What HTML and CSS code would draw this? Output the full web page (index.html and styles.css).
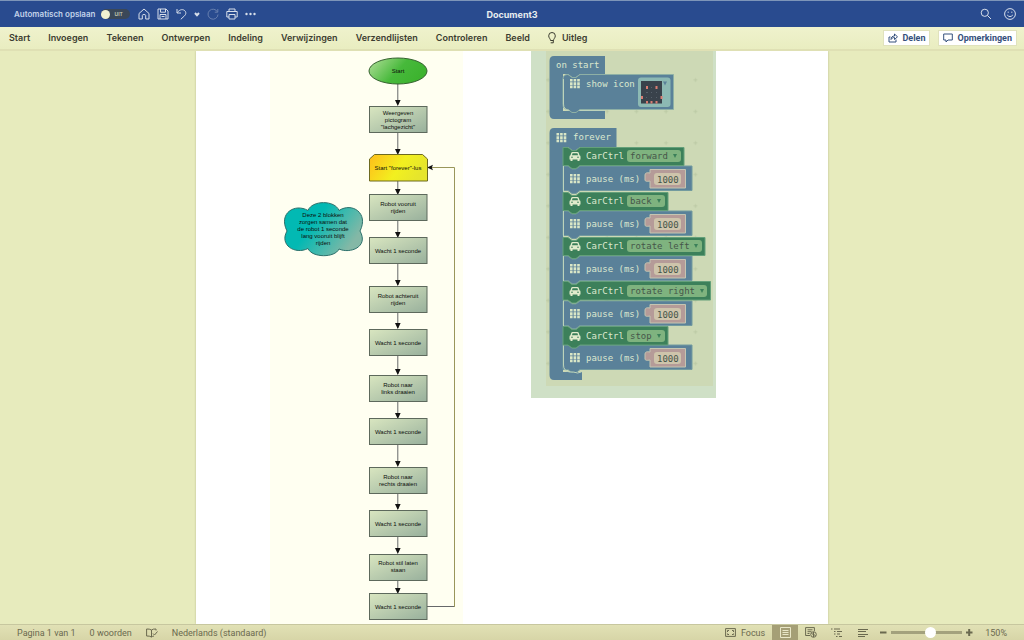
FILE: index.html
```html
<!DOCTYPE html>
<html lang="nl">
<head>
<meta charset="utf-8">
<title>Document3</title>
<link rel="stylesheet" href="styles.css">
</head>
<body>
<header class="titlebar">
  <div class="quick">
    <label class="autosave"><span>Automatisch opslaan</span>
      <span class="switch"><input type="checkbox" class="knob"><span>UIT</span></span>
    </label>
    <div class="tools">
      <button class="tool" aria-label="Start"><svg width="12" height="12" viewBox="0 0 12 12"><path d="M1 5.500 6 1l5 4.500V11H7.700V7.500Q7.700 6.500 6 6.500T4.300 7.500V11H1z"/></svg></button>
      <button class="tool" aria-label="Opslaan"><svg width="12" height="12" viewBox="0 0 12 12"><path d="M1 1h8l2 2v8H1zM3.500 1v3.200h5V1M3 11V6.500h6V11M4.500 8.500h3"/></svg></button>
      <button class="tool" aria-label="Ongedaan maken"><svg width="11" height="12" viewBox="0 0 11 12"><path d="M1 1v4h4M1.200 4.800C3 2 6 .8 8.300 2.300c2.200 1.700 1.800 4 .2 5.500L4.800 11.300"/></svg></button>
      <button class="tool chevron" aria-label="Meer ongedaan maken"><svg width="6" height="12" viewBox="0 0 6 12"><path d="M1 5l2 2.200L5 5"/></svg></button>
      <button class="tool faded" aria-label="Opnieuw"><svg width="12" height="12" viewBox="0 0 12 12"><path d="M10.500 4A5 5 0 1 0 11 6.500M10.800 1v3.200H7.800"/></svg></button>
      <button class="tool" aria-label="Afdrukken"><svg width="12" height="12" viewBox="0 0 12 12"><path d="M3 3.500V1h6v2.500M3 9H.8V3.500h10.400V9H9M3 6.500h6V11H3z"/></svg></button>
      <button class="tool" aria-label="Meer"><svg width="11" height="12" viewBox="0 0 11 12"><g class="dots"><circle cx="1.500" cy="6" r="1.200"/><circle cx="5.500" cy="6" r="1.200"/><circle cx="9.500" cy="6" r="1.200"/></g></svg></button>
    </div>
  </div>
  <h1 class="title">Document3</h1>
  <div class="account">
    <button class="tool" aria-label="Zoeken"><svg width="12" height="12" viewBox="0 0 12 12"><circle cx="4.800" cy="4.800" r="3.600"/><path d="M7.500 7.500 11 11"/></svg></button>
    <button class="tool" aria-label="Feedback"><svg width="12" height="12" viewBox="0 0 12 12"><circle cx="6" cy="6" r="5.400"/><path d="M3.200 7q2.800 3.200 5.600 0M4.200 3.600v1.200M7.800 3.600v1.200"/></svg></button>
  </div>
</header>
<nav class="ribbon">
  <div class="tabs">
    <button class="tab">Start</button>
    <button class="tab">Invoegen</button>
    <button class="tab">Tekenen</button>
    <button class="tab">Ontwerpen</button>
    <button class="tab">Indeling</button>
    <button class="tab">Verwijzingen</button>
    <button class="tab">Verzendlijsten</button>
    <button class="tab">Controleren</button>
    <button class="tab">Beeld</button>
    <button class="tab tell"><svg width="8" height="12" viewBox="0 0 8 12"><path d="M2.500 8.500C2.500 6.800.7 6 .7 3.800a3.300 3.300 0 0 1 6.600 0C7.300 6 5.500 6.800 5.500 8.500zM2.700 10.800h2.600V8.500"/></svg>Uitleg</button>
  </div>
  <div class="share">
    <button class="action"><svg width="10" height="10" viewBox="0 0 10 10"><path d="M2.500 4H1v5h7V6.500M3 6.500C3 4 4.500 3 6.500 3V1l3 2.800-3 2.700v-2C5 4.500 4 5 3 6.500z"/></svg>Delen</button>
    <button class="action"><svg width="10" height="10" viewBox="0 0 10 10"><path d="M.7 1h8.600v6H5L3 9V7H.7z"/></svg>Opmerkingen</button>
  </div>
</nav>
<main class="workspace">
  <article class="sheet">
    <svg class="flow" width="193" height="573" viewBox="270 51 193 573" role="img" aria-label="Stroomdiagram">
      <defs>
        <linearGradient id="step" x1="0" y1="0" x2="1" y2="1"><stop offset="0" stop-color="#d9e6c0"/><stop offset="1" stop-color="#98b09c"/></linearGradient>
        <linearGradient id="begin" x1="0" y1="0" x2="1" y2=".4"><stop offset="0" stop-color="#b5e09c"/><stop offset=".6" stop-color="#47b93b"/><stop offset="1" stop-color="#3db32f"/></linearGradient>
        <linearGradient id="loop" x1="0" y1="0" x2="1" y2=".3"><stop offset="0" stop-color="#ffbd1a"/><stop offset=".6" stop-color="#f2f01f"/><stop offset="1" stop-color="#e6e52c"/></linearGradient>
        <linearGradient id="note" x1="0" y1="0" x2="1" y2=".5"><stop offset=".45" stop-color="#02b9b3"/><stop offset="1" stop-color="#84b8a6"/></linearGradient>
        <g id="box"><rect x="369.500" y=".5" width="57.500" height="26"/></g>
        <path id="tip" d="M395 -6h5.600l-2.800 6z"/>
      </defs>
      <g class="wire">
        <path d="M397.800 84v20M397.800 132v20M397.800 181v12M397.800 221v15M397.800 264v21M397.800 312v16M397.800 355v19M397.800 402v15M397.800 445v20M397.800 493v16M397.800 536v16M397.800 580v12M427 606.500h27"/>
        <path class="olive" d="M454.500 607V167.500H430"/>
      </g>
      <g class="tips">
        <use href="#tip" y="106"/><use href="#tip" y="155"/><use href="#tip" y="195"/><use href="#tip" y="238"/><use href="#tip" y="286"/><use href="#tip" y="329"/><use href="#tip" y="375"/><use href="#tip" y="419"/><use href="#tip" y="467"/><use href="#tip" y="510"/><use href="#tip" y="554"/><use href="#tip" y="594"/>
        <path d="M427 167.500l6-2.800-1.200 2.800 1.200 2.800z"/>
      </g>
      <g class="steps">
        <use href="#box" y="106"/><use href="#box" y="194"/><use href="#box" y="237"/><use href="#box" y="286"/><use href="#box" y="329"/><use href="#box" y="375"/><use href="#box" y="418"/><use href="#box" y="467"/><use href="#box" y="510"/><use href="#box" y="554"/><use href="#box" y="593"/>
      </g>
      <ellipse class="begin" cx="398" cy="71" rx="29" ry="13"/>
      <path class="loop" d="M369.500 181V159l5-4.500h48l5 4.500v22z"/>
      <path class="note" d="M308 210.500C312 200 335 200 339 210.500 352 202 369 213 360 231 369 247 350 254 339 249 335 258 312 258 308 248.500 295 255 279 245 287 231 278 213 295 203 308 210.500z"/>
      <g class="caption">
        <text x="398" y="73">Start</text>
        <text x="398" y="115">Weergeven</text><text x="398" y="122">pictogram</text><text x="398" y="129">"lachgezicht"</text>
        <text x="398" y="170">Start "forever"-lus</text>
        <text x="398" y="206">Robot vooruit</text><text x="398" y="213">rijden</text>
        <text x="398" y="253">Wacht 1 seconde</text>
        <text x="398" y="298">Robot achteruit</text><text x="398" y="305">rijden</text>
        <text x="398" y="345">Wacht 1 seconde</text>
        <text x="398" y="387">Robot naar</text><text x="398" y="394">links draaien</text>
        <text x="398" y="434">Wacht 1 seconde</text>
        <text x="398" y="479">Robot naar</text><text x="398" y="486">rechts draaien</text>
        <text x="398" y="526">Wacht 1 seconde</text>
        <text x="398" y="565">Robot stil laten</text><text x="398" y="572">staan</text>
        <text x="398" y="609">Wacht 1 seconde</text>
        <text x="323" y="217">Deze 2 blokken</text><text x="323" y="224">zorgen samen dat</text><text x="323" y="231">de robot 1 seconde</text><text x="323" y="238">lang vooruit blijft</text><text x="323" y="245">rijden</text>
      </g>
    </svg>
    <svg class="code" width="185" height="347" viewBox="531 51 185 347" role="img" aria-label="Blokkencode">
      <defs>
        <pattern id="plus" x="533" y="64.500" width="29.500" height="31.500" patternUnits="userSpaceOnUse"><path d="M13 15.500h4M15 13.500v4" stroke="#bccaa5"/></pattern>
        <g id="grid" fill="#d9e6c6"><path d="M0 0h2.600v2.600H0zM3.600 0h2.600v2.600H3.600zM7.200 0h2.600v2.600H7.200zM0 3.300h2.600v2.600H0zM3.600 3.300h2.600v2.600H3.600zM7.200 3.300h2.600v2.600H7.200zM0 6.600h2.600v2.600H0zM3.600 6.600h2.600v2.600H3.600zM7.200 6.600h2.600v2.600H7.200z"/></g>
        <g id="car"><path fill="#e2ebcc" d="M2.500 0h5q1 0 1.300 1l.7 2.300q1 .3 1 1.500V7.500h-1V9h-2V7.500h-5V9h-2V7.500h-1V4.800q0-1.200 1-1.500L1.200 1Q1.500 0 2.500 0z"/><path fill="#3c805a" d="M2.600 1.200h4.800l.7 2.100H1.900z"/><circle fill="#3c805a" cx="2" cy="5.300" r=".8"/><circle fill="#3c805a" cx="8" cy="5.300" r=".8"/></g>
        <g id="pause">
          <path class="blue edge" d="M563 0h5l4 3h4l4-3h112v24.500H580l-4 3h-4l-4-3h-5z"/>
          <use href="#grid" x="570" y="8"/>
          <text class="word" x="586" y="16">pause (ms)</text>
          <path class="pink" d="M650 3.500v3.500q-5-1-5 2v5q0 2 5 1v7h35.500V3.500z"/>
          <rect class="pill" x="654" y="7" width="27" height="12" rx="3"/>
          <text class="value" x="657" y="17">1000</text>
        </g>
        <g id="ctrl">
          <use href="#car" x="570" y="5"/>
          <text class="word" x="586" y="12">CarCtrl</text>
        </g>
        <path id="drop" d="M-2 8h4l-2 4z" fill="#3c805a"/>
      </defs>
      <rect x="531" y="51" width="185" height="347" fill="#cfe0c6"/>
      <rect x="546" y="51" width="167" height="335" fill="#cdd9b5"/>
      <rect x="546" y="51" width="167" height="335" fill="url(#plus)"/>
      <path class="blue" d="M605 56v18h-25l-4 3h-4l-4-3h-5v37h42v8h-51q-4.500 0-4.500-5V61q0-5 4.500-5z"/>
      <path class="blue line" d="M673.500 74.500v35H580l-4 3h-4l-4-3q-5 0-5-5V79q0-4.500 5-4.500l4 3h4l4-3z"/>
      <path class="groove" d="M563.500 79v25q0 6 6 6.500M580 110.500h25"/>
      <text class="word" x="556" y="68">on start</text>
      <use href="#grid" x="570" y="79"/>
      <text class="word" x="586" y="87">show icon</text>
      <rect x="638" y="77.500" width="32.500" height="29.500" rx="3" fill="#8cb9b3"/>
      <rect x="641" y="81" width="21" height="22.500" fill="#39424b"/>
      <path d="M646 86h2v3h-2zM655.500 86h2v3h-2zM641 96h2v3h-2zM660.500 96h2v3h-2zM646 101h2v2.500h-2zM650.500 101h2v2.500h-2zM655.500 101h2v2.500h-2z" fill="#d97d72"/>
      <path d="M646 92h2v1h-2zM651 87h1v1h-1zM651 92h1v1h-1zM656 92h1v1h-1zM646 97h1v1h-1zM651 97h1v1h-1zM656 97h1v1h-1z" fill="#56606a"/>
      <path d="M663 81.500h4l-2 4z" fill="#5a8199"/>

      <path class="blue" d="M616.500 128v19H580l-4 3h-4l-4-3h-5v225h19v8h-28q-4.500 0-4.500-5V133q0-5 4.500-5z"/>
      <use href="#grid" x="556.500" y="133"/>
      <text class="word" x="573" y="140">forever</text>
      <use href="#pause" y="166"/><use href="#pause" y="211"/><use href="#pause" y="256"/><use href="#pause" y="301"/><use href="#pause" y="345"/>
      <path class="groove" d="M563.500 365q0 6 6 7h4q4 2 8 0M563.500 147v218"/>

      <path class="green" d="M563 147.500h5l4 3h4l4-3h104v18H580l-4 3h-4l-4-3h-5z"/>
      <use href="#ctrl" y="147"/><rect class="menu" x="627" y="150" width="54" height="12" rx="3"/>
      <text class="value" x="630" y="159">forward</text><use href="#drop" x="675" y="146"/>

      <path class="green" d="M563 192.500h5l4 3h4l4-3h88v18H580l-4 3h-4l-4-3h-5z"/>
      <use href="#ctrl" y="192"/><rect class="menu" x="627" y="195" width="38" height="12" rx="3"/>
      <text class="value" x="630" y="204">back</text><use href="#drop" x="659" y="191"/>

      <path class="green" d="M563 237.500h5l4 3h4l4-3h125v18H580l-4 3h-4l-4-3h-5z"/>
      <use href="#ctrl" y="237"/><rect class="menu" x="627" y="240" width="75" height="12" rx="3"/>
      <text class="value" x="630" y="249">rotate left</text><use href="#drop" x="696" y="236"/>

      <path class="green" d="M563 281.500h5l4 3h4l4-3h130.500V300H580l-4 3h-4l-4-3h-5z"/>
      <use href="#ctrl" y="282"/><rect class="menu" x="627" y="285" width="80" height="12" rx="3"/>
      <text class="value" x="630" y="294">rotate right</text><use href="#drop" x="702" y="281"/>

      <path class="green" d="M563 326.500h5l4 3h4l4-3h88V345H580l-4 3h-4l-4-3h-5z"/>
      <use href="#ctrl" y="327"/><rect class="menu" x="627" y="330" width="38" height="12" rx="3"/>
      <text class="value" x="630" y="339">stop</text><use href="#drop" x="659" y="326"/>
    </svg>
  </article>
</main>
<footer class="status">
  <div class="info">
    <span>Pagina 1 van 1</span>
    <span>0 woorden</span>
    <button class="mini" aria-label="Spelling"><svg width="12" height="10" viewBox="0 0 12 10"><path d="M5.500 2Q3.500.8.6 1v7q2.900-.2 4.900 1 1-.8 2.500-1M5.500 2v7M5.500 2Q7 .8 10 1v1.500M7 5.500l1.500 1.500L11.500 3.500"/></svg></button>
    <span>Nederlands (standaard)</span>
  </div>
  <div class="views">
    <button class="focus"><svg width="11" height="9" viewBox="0 0 11 9"><path d="M.6.6h9.800v7.800H.6zM2.500 4V2.500H4M7 2.500h1.500V4M8.500 5.500V6.500H7M4 6.500H2.500v-1"/></svg>Focus</button>
    <button class="view active" aria-label="Afdrukweergave"><svg width="11" height="11" viewBox="0 0 11 11"><path d="M.5.5h10v10H.5zM2.500 3.500h6M2.500 5.500h6M2.500 7.500h6"/></svg></button>
    <button class="view" aria-label="Weblay-out"><svg width="12" height="11" viewBox="0 0 12 11"><path d="M5 8.500H.6V.6h8.800V4M2.500 2.800h5M2.500 4.700h4M2.500 6.500h2"/><circle cx="8.500" cy="7.500" r="2.800"/><path d="M6.500 6.500l4 2M8.500 5v5"/></svg></button>
    <button class="view" aria-label="Overzicht"><svg width="12" height="10" viewBox="0 0 12 10"><path d="M0 1h1.500M3 1h6M3 3.500h1.500M6 3.500h5M3 6h1.500M6 6h3M5 8.500h1.500M8 8.500h3"/></svg></button>
    <button class="view" aria-label="Concept"><svg width="11" height="10" viewBox="0 0 11 10"><path d="M0 1.500h10M0 3.500h8M0 6.500h10M0 8.500h7"/></svg></button>
    <div class="zoom">
      <button class="mini" aria-label="Uitzoomen"><svg width="7" height="7" viewBox="0 0 7 7"><path class="thick" d="M0 3.500h6.500"/></svg></button>
      <input class="range" type="range" min="0" max="100" value="56" aria-label="Zoomniveau">
      <button class="mini" aria-label="Inzoomen"><svg width="7" height="7" viewBox="0 0 7 7"><path class="thick" d="M0 3.500h6.500M3.200 0v7"/></svg></button>
    </div>
    <span class="percent">150%</span>
  </div>
</footer>
</body>
</html>
```
FILE: styles.css
```css
* { box-sizing: border-box; }
body {
  margin: 0;
  height: 100vh;
  display: flex;
  flex-direction: column;
  overflow: hidden;
  font-family: Inter, "Liberation Sans", sans-serif;
  font-size: 9px;
  background: #e7ebbd;
}
button {
  display: flex;
  align-items: center;
  margin: 0;
  padding: 0;
  border: 0;
  background: none;
  color: inherit;
  font: inherit;
}
svg { display: block; flex: none; fill: none; stroke: currentColor; }

.titlebar {
  display: grid;
  grid-template-columns: 1fr auto 1fr;
  align-items: center;
  height: 27px;
  padding: 0 8px;
  border-top: 1px solid #7d95b9;
  background: #294b8f;
  color: #d8dfea;
}
.quick, .tools, .account, .autosave { display: flex; align-items: center; }
.quick { gap: 8px; padding-left: 6px; }
.autosave { gap: 6px; font-weight: 600; font-size: 8px; color: #c3d3ea; }
.switch {
  display: flex;
  align-items: center;
  gap: 4px;
  width: 29px;
  height: 10px;
  border-radius: 5px;
  background: #3b4858;
  color: #c5ccb4;
  font-size: 5px;
}
.knob {
  appearance: none;
  width: 9px;
  height: 9px;
  margin: 0;
  border-radius: 50%;
  background: #f1f2d2;
}
.tools { gap: 7px; }
.chevron { stroke-width: 2; }
.faded { opacity: .35; }
.dots { fill: currentColor; stroke: none; }
.title { margin: 0; font-size: 9px; font-weight: 700; color: #e8edf0; }
.account { justify-content: flex-end; gap: 12px; }

.ribbon {
  display: flex;
  justify-content: space-between;
  height: 24px;
  padding: 0 7px 0 9px;
  border-bottom: 2px solid #dfe0b4;
  background: linear-gradient(#eff2cd, #e9edc0);
  color: #3c3d30;
}
.tabs { display: flex; gap: 18px; height: 21px; font-weight: 600; }
.tell { gap: 6px; }
.share { display: flex; align-items: center; gap: 8px; }
.action {
  gap: 4px;
  height: 16px;
  padding: 0 4px;
  border: 1px solid #e0e2bd;
  background: #fff;
  color: #35507c;
  font-family: Roboto, sans-serif;
  font-weight: 700;
}

.workspace { flex: 1; min-height: 0; overflow: hidden; }
.sheet {
  display: flex;
  align-items: flex-start;
  gap: 68px;
  width: 632px;
  max-width: 100%;
  margin: 0 auto;
  padding-left: 74px;
  background: #fff;
  box-shadow: 0 0 2px #b8bb90;
}
.flow { background: #fffff1; }
.flow, .code { stroke: none; }
.wire { stroke: #66686a; }
.olive { stroke: #99965a; }
.tips { fill: #111; }
.steps { fill: url(#step); stroke: #5d695c; }
.begin { fill: url(#begin); stroke: #35622f; }
.loop { fill: url(#loop); stroke: #6d6a20; }
.note { fill: url(#note); stroke: #2c706b; }
.caption {
  fill: #0c0f0c;
  font-family: "Liberation Sans", sans-serif;
  font-size: 6px;
  text-anchor: middle;
}
.blue { fill: #5a8199; }
.edge { stroke: #739b9f; stroke-width: 1; }
.line { stroke: #8eb0a5; }
.groove { stroke: #bdd3bb; stroke-width: 1; fill: none; }
.green { fill: #3c805a; stroke: #64a07a; stroke-width: 1; }
.menu { fill: #7fb37f; }
.pink { fill: #b59b98; stroke: #c4c5b1; stroke-width: 1; }
.pill { fill: #cec4ab; }
.word, .value { font-family: "DejaVu Sans Mono", monospace; font-size: 9px; }
.word { fill: #dce8cf; }
.value { fill: #46564a; }

.status {
  display: flex;
  justify-content: space-between;
  height: 16px;
  padding: 0 17px;
  border-top: 1px solid #c7c79f;
  background: linear-gradient(#e1e1b5, #d7d5a7);
  color: #6a694f;
  font-family: Roboto, sans-serif;
}
.info, .views, .zoom { display: flex; align-items: center; }
.info { gap: 14px; }
.focus { gap: 5px; margin-right: 7px; }
.view { justify-content: center; width: 26px; height: 15px; }
.active { background: #a59f76; color: #e9e7c8; }
.zoom { gap: 4px; margin: 0 12px 0 4px; }
.thick { stroke-width: 2; }
.range {
  appearance: none;
  width: 71px;
  height: 11px;
  margin: 0;
  background: linear-gradient(#a3a17d, #a3a17d) center / 100% 3px no-repeat;
}
.range::-webkit-slider-thumb {
  appearance: none;
  width: 11px;
  height: 11px;
  border-radius: 50%;
  background: #fff;
}
```
